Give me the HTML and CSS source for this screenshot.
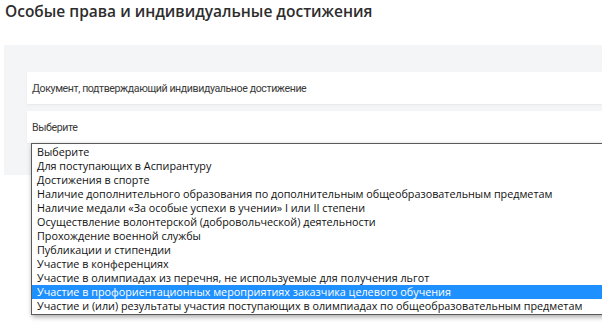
FILE: index.html
```html
<!DOCTYPE html>
<html lang="ru">
<head>
<meta charset="utf-8">
<link rel="stylesheet" href="styles.css">
</head>
<body>
<h2 class="title">Особые права и индивидуальные достижения</h2>
<section class="panel">
  <div class="card">Документ, подтверждающий индивидуальное достижение</div>
  <div class="card select-card">
    <span>Выберите</span>
    <ul class="listbox">
      <li>Выберите</li>
      <li>Для поступающих в Аспирантуру</li>
      <li>Достижения в спорте</li>
      <li>Наличие дополнительного образования по дополнительным общеобразовательным предметам</li>
      <li>Наличие медали «За особые успехи в учении» I или II степени</li>
      <li>Осуществление волонтерской (добровольческой) деятельности</li>
      <li>Прохождение военной службы</li>
      <li>Публикации и стипендии</li>
      <li>Участие в конференциях</li>
      <li>Участие в олимпиадах из перечня, не используемые для получения льгот</li>
      <li class="selected">Участие в профориентационных мероприятиях заказчика целевого обучения</li>
      <li>Участие и (или) результаты участия поступающих в олимпиадах по общеобразовательным предметам</li>
    </ul>
  </div>
</section>
</body>
</html>
```
FILE: styles.css
```css
html, body {
  margin: 0;
  padding: 0;
  background: #fff;
}
body {
  width: 602px;
  height: 331px;
  overflow: hidden;
}
.title {
  margin: 0;
  padding: 1px 0 0 5px;
  height: 44px;
  line-height: 20px;
  font-family: "Open Sans", sans-serif;
  font-weight: 600;
  font-size: 15.5px;
  color: #2d2d2d;
}
.panel {
  margin-left: 4px;
  background: #f4f5f7;
  padding: 27px 0 32px 23px;
  display: flex;
  flex-direction: column;
  gap: 7px;
}
.card {
  background: #fff;
  height: 32px;
  display: flex;
  align-items: center;
  padding-left: 5px;
  font-family: Roboto, sans-serif;
  font-size: 10.6px;
  letter-spacing: -0.4px;
  color: #3a3a3a;
  box-shadow: 0 1px 2px rgba(0,0,0,0.06);
}
.select-card {
  position: relative;
}
.listbox {
  position: absolute;
  left: 4px;
  top: 32px;
  width: 590px;
  margin: 0;
  padding: 1px 0;
  list-style: none;
  background: #fff;
  border: 1px solid #5a5a5a;
  border-right: none;
  box-shadow: 1px 2px 5px rgba(0,0,0,0.35);
  font-family: "Open Sans", sans-serif;
  font-size: 10.8px;
  letter-spacing: 0;
  color: #111;
  z-index: 2;
}
.listbox li {
  height: 14px;
  line-height: 14px;
  padding-left: 5px;
  white-space: nowrap;
}
.listbox li.selected {
  background: #1e90ff;
  color: #fff;
}
```
